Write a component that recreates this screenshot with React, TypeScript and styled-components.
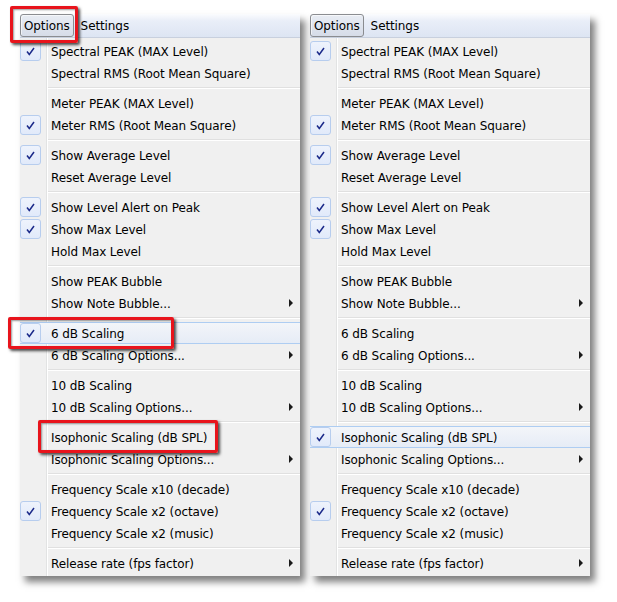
import React from 'react';
import styled, { createGlobalStyle, css } from 'styled-components';

type Entry =
    | { kind: 'item'; label: string; checked?: boolean; sub?: boolean; hot?: boolean }
    | { kind: 'sep' };

const GlobalStyle = createGlobalStyle`
    html, body {
        margin: 0;
        padding: 0;
        background: #ffffff;
    }
    body {
        font-family: "DejaVu Sans", "Liberation Sans", sans-serif;
        font-size: 11px;
        color: #000000;
    }
`;

function buildEntries(isoChecked: boolean, sixHot: boolean): Entry[] {
    return [
        { kind: 'item', label: 'Spectral PEAK (MAX Level)', checked: true },
        { kind: 'item', label: 'Spectral RMS (Root Mean Square)' },
        { kind: 'sep' },
        { kind: 'item', label: 'Meter PEAK (MAX Level)' },
        { kind: 'item', label: 'Meter RMS (Root Mean Square)', checked: true },
        { kind: 'sep' },
        { kind: 'item', label: 'Show Average Level', checked: true },
        { kind: 'item', label: 'Reset Average Level' },
        { kind: 'sep' },
        { kind: 'item', label: 'Show Level Alert on Peak', checked: true },
        { kind: 'item', label: 'Show Max Level', checked: true },
        { kind: 'item', label: 'Hold Max Level' },
        { kind: 'sep' },
        { kind: 'item', label: 'Show PEAK Bubble' },
        { kind: 'item', label: 'Show Note Bubble...', sub: true },
        { kind: 'sep' },
        { kind: 'item', label: '6 dB Scaling', checked: !isoChecked, hot: sixHot },
        { kind: 'item', label: '6 dB Scaling Options...', sub: true },
        { kind: 'sep' },
        { kind: 'item', label: '10 dB Scaling' },
        { kind: 'item', label: '10 dB Scaling Options...', sub: true },
        { kind: 'sep' },
        { kind: 'item', label: 'Isophonic Scaling (dB SPL)', checked: isoChecked, hot: isoChecked },
        { kind: 'item', label: 'Isophonic Scaling Options...', sub: true },
        { kind: 'sep' },
        { kind: 'item', label: 'Frequency Scale x10 (decade)' },
        { kind: 'item', label: 'Frequency Scale x2 (octave)', checked: true },
        { kind: 'item', label: 'Frequency Scale x2 (music)' },
        { kind: 'sep' },
        { kind: 'item', label: 'Release rate (fps factor)', sub: true },
    ];
}

function CheckMark() {
    return (
        <svg width="9" height="9" viewBox="0 0 9 9">
            <path d="M1 4.5 L3.3 7.5 L8 1" fill="none" stroke="#1b2a8a" strokeWidth="1.5" />
        </svg>
    );
}

function Menu({ entries }: { entries: Entry[] }) {
    return (
        <MenuWrap>
            <MenuBar>
                <BarButton pressed>Options</BarButton>
                <BarButton>Settings</BarButton>
            </MenuBar>
            <Dropdown>
                {entries.map((entry, index) =>
                    entry.kind === 'sep' ? (
                        <Separator key={`sep-${index}`} />
                    ) : (
                        <Item key={`${entry.label}-${index}`} $hot={entry.hot}>
                            <Gutter>{entry.checked && <CheckBox><CheckMark /></CheckBox>}</Gutter>
                            <Label>{entry.label}</Label>
                            {entry.sub && <Arrow />}
                        </Item>
                    )
                )}
            </Dropdown>
        </MenuWrap>
    );
}

function App() {
    return (
        <>
            <GlobalStyle />
            <Page>
                <Menu entries={buildEntries(false, true)} />
                <Menu entries={buildEntries(true, false)} />
                <Callout $x={10} $y={6} $w={68} $h={37} />
                <Callout $x={8} $y={317} $w={166} $h={32} />
                <Callout $x={38} $y={420} $w={180} $h={33} />
            </Page>
        </>
    );
}

const Page = styled.div`
    position: relative;
    display: flex;
    gap: 10px;
    padding: 14px 0 0 20px;
    width: 617px;
    height: 602px;
    box-sizing: border-box;
`;

const MenuWrap = styled.div`
    width: 280px;
    align-self: flex-start;
    box-shadow: 5px 6px 7px rgba(0, 0, 0, 0.5);
`;

const MenuBar = styled.div`
    height: 24px;
    display: flex;
    align-items: stretch;
    background: linear-gradient(to bottom, #fbfcfe 0%, #e9eef8 30%, #dde5f3 100%);
    border-bottom: 1px solid #c8d0de;
    box-sizing: border-box;
`;

const BarButton = styled.div<{ pressed?: boolean }>`
    display: flex;
    align-items: center;
    padding: 0 3px;
    margin-right: 3px;
    font-size: 12px;
    letter-spacing: -0.1px;
    border: 1px solid transparent;
    border-radius: 3px;
    ${(p) => p.pressed && css`
        border-color: #8a8c90;
        background: linear-gradient(to bottom, #e8ecf3 0%, #d6dce8 100%);
        box-shadow: inset 1px 1px 0 rgba(255, 255, 255, 0.6);
    `}
`;

const Dropdown = styled.div`
    padding: 2px 0;
    background: linear-gradient(to right, #f0f0f0 0, #f0f0f0 26px, #e2e3e3 26px, #e2e3e3 27px, #ffffff 27px, #ffffff 28px, #f0f0f0 28px);
`;

const Item = styled.div<{ $hot?: boolean }>`
    height: 22px;
    display: flex;
    align-items: center;
    position: relative;
    box-sizing: border-box;
    ${(p) => p.$hot && css`
        border-top: 1px solid #aecdf2;
        border-bottom: 1px solid #aecdf2;
        background: linear-gradient(to bottom, #f3f5f9 0%, #e6ecf6 100%);
    `}
`;

const Gutter = styled.div`
    width: 31px;
    align-self: stretch;
    display: flex;
    align-items: center;
    flex-shrink: 0;
`;

const CheckBox = styled.div`
    width: 21px;
    height: 20px;
    box-sizing: border-box;
    border: 1px solid #b7cdee;
    border-radius: 3px;
    background: linear-gradient(to bottom, #eef3fc 0%, #e1eafa 100%);
    display: flex;
    align-items: center;
    justify-content: center;
`;

const Label = styled.span`
    flex: 1;
    white-space: nowrap;
    font-size: 12px;
    letter-spacing: -0.1px;
    padding-top: 2px;
`;

const Arrow = styled.span`
    width: 0;
    height: 0;
    border-top: 4px solid transparent;
    border-bottom: 4px solid transparent;
    border-left: 4px solid #1a1a1a;
    margin-right: 7px;
`;

const Separator = styled.div`
    height: 8px;
    margin-left: 28px;
    position: relative;
    &::before {
        content: '';
        position: absolute;
        left: 0;
        right: 0;
        top: 3px;
        border-top: 1px solid #e0e0e0;
        border-bottom: 1px solid #ffffff;
    }
`;

const Callout = styled.div<{ $x: number; $y: number; $w: number; $h: number }>`
    position: absolute;
    left: ${(p) => p.$x}px;
    top: ${(p) => p.$y}px;
    width: ${(p) => p.$w}px;
    height: ${(p) => p.$h}px;
    box-sizing: border-box;
    border: 3px solid #e8141c;
    border-radius: 2px;
    box-shadow: 2px 2px 3px rgba(0, 0, 0, 0.7), inset 1px 1px 2px rgba(0, 0, 0, 0.4);
`;

export default App;
